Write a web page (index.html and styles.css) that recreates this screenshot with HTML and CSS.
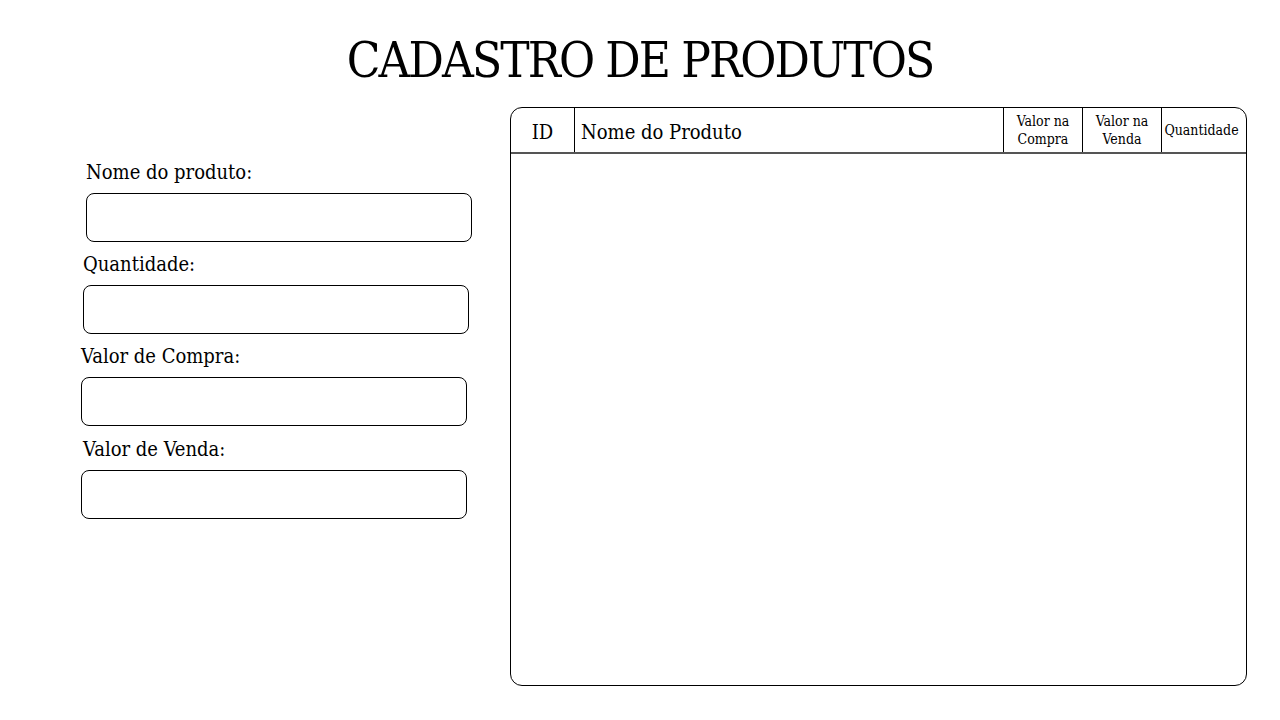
FILE: index.html
```html
<!DOCTYPE html>
<html lang="pt">
<head>
<meta charset="utf-8">
<title>Cadastro de Produtos</title>
<link rel="stylesheet" href="styles.css">
</head>
<body>
<h1 class="title">CADASTRO DE PRODUTOS</h1>
<main class="layout">
  <form class="form">
    <div class="field field-a">
      <label class="label">Nome do produto:</label>
      <input class="input" type="text">
    </div>
    <div class="field field-b">
      <label class="label">Quantidade:</label>
      <input class="input" type="text">
    </div>
    <div class="field field-c">
      <label class="label">Valor de Compra:</label>
      <input class="input" type="text">
    </div>
    <div class="field field-d">
      <label class="label">Valor de Venda:</label>
      <input class="input" type="text">
    </div>
  </form>
  <section class="table">
    <div class="thead">
      <div class="th th-id">ID</div>
      <div class="th th-name">Nome do Produto</div>
      <div class="th th-small th-buy">Valor na<br>Compra</div>
      <div class="th th-small th-sell">Valor na<br>Venda</div>
      <div class="th th-small th-qty">Quantidade</div>
    </div>
    <div class="tbody"></div>
  </section>
</main>
</body>
</html>
```
FILE: styles.css
```css
* { box-sizing: border-box; }
body {
  margin: 0;
  background: #fff;
  color: #000;
  font-family: "DejaVu Serif", "Liberation Serif", serif;
  font-stretch: condensed;
  width: 1280px;
  height: 720px;
  overflow: hidden;
}
.title {
  margin: 30px 0 0;
  text-align: center;
  font-weight: normal;
  font-size: 49px;
  line-height: 62px;
  height: 77px;
  letter-spacing: -1.9px;
}
.layout {
  display: flex;
  align-items: flex-start;
  padding-left: 81px;
}
.form {
  width: 429px;
  padding-top: 53px;
  display: flex;
  flex-direction: column;
  gap: 10px;
}
.field {
  display: flex;
  flex-direction: column;
}
.label {
  font-size: 20px;
  line-height: 24px;
  height: 24px;
  margin-bottom: 9px;
}
.input {
  width: 386px;
  height: 49px;
  border: 1px solid #000;
  border-radius: 8px;
  background: #fff;
  outline: none;
  padding: 0 10px;
  font: inherit;
}
.field-a { margin-left: 5px; }
.field-b { margin-left: 2px; }
.field-c { margin-left: 0; }
.field-d { margin-top: 1px; }
.field-d .label { margin-left: 2px; }
.table {
  width: 737px;
  height: 579px;
  border: 1px solid #000;
  border-radius: 12px;
  display: flex;
  flex-direction: column;
  overflow: hidden;
}
.thead {
  display: flex;
  height: 46px;
  border-bottom: 2px solid #555;
}
.th {
  display: flex;
  align-items: center;
  border-right: 1px solid #000;
  font-size: 20px;
}
.th:last-child { border-right: 0; }
.th-id { width: 64px; justify-content: center; padding-top: 4px; }
.th-name { width: 429px; padding-left: 6px; padding-top: 4px; }
.th-small {
  font-size: 14px;
  line-height: 18px;
  text-align: center;
  justify-content: center;
}
.th-buy { width: 79px; }
.th-sell { width: 79px; }
.th-qty { flex: 1; padding-right: 5px; }
.tbody { flex: 1; }
```
